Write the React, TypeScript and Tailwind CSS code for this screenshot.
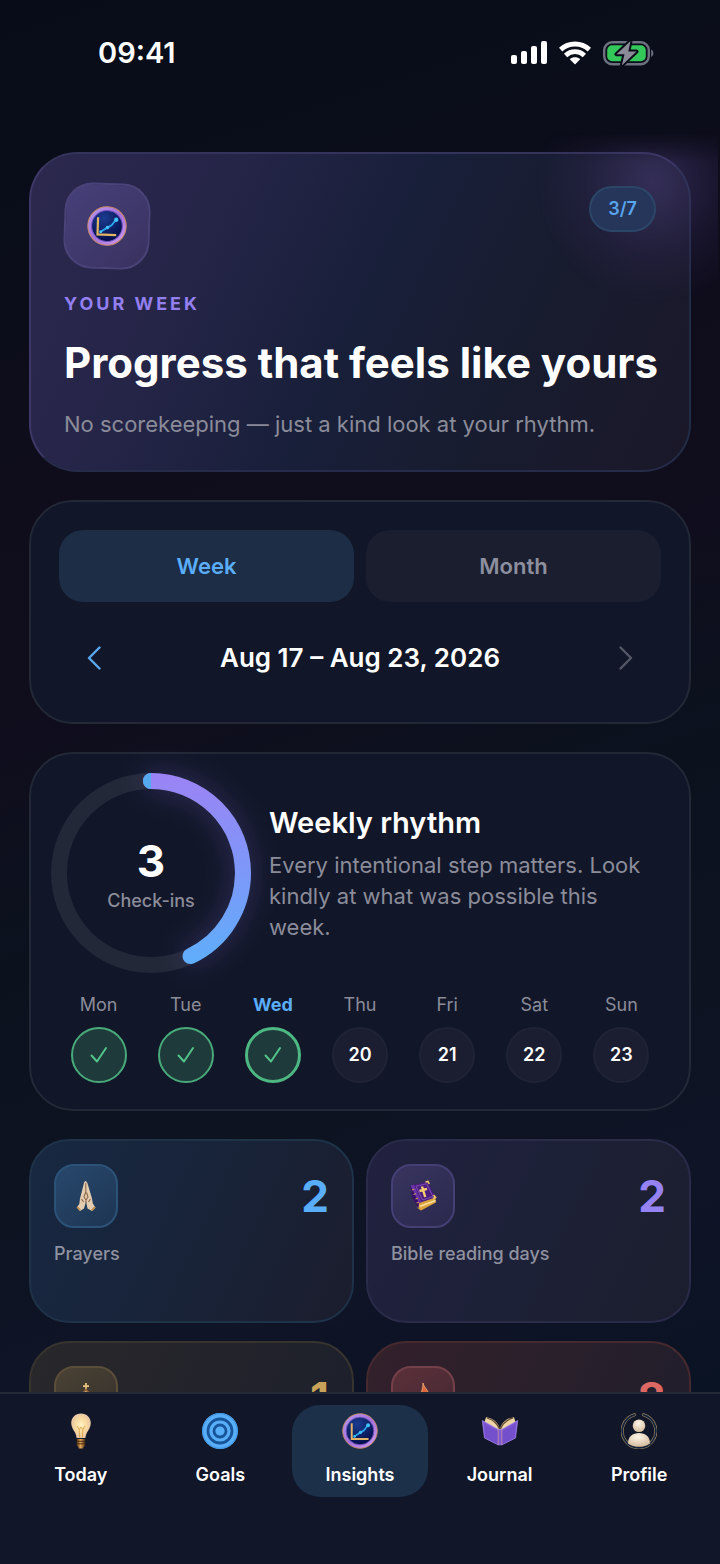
import React, { useState } from "react";

interface IconProps {
  className?: string;
}

interface StatCardProps {
  label: string;
  value: number;
  card: string;
  tile: string;
  valueColor: string;
  icon: React.ReactNode;
}

interface DayProps {
  name: string;
  date: number;
  done: boolean;
  today?: boolean;
}

const SignalIcon = () => (
  <svg className="w-9 h-6" viewBox="0 0 36 24" fill="#fff">
    <rect x="0" y="14" width="6" height="9" rx="2" />
    <rect x="10" y="10" width="6" height="13" rx="2" />
    <rect x="20" y="5" width="6" height="18" rx="2" />
    <rect x="30" y="0" width="6" height="23" rx="2" />
  </svg>
);

const WifiIcon = () => (
  <svg className="w-8 h-6" viewBox="0 0 32 24" fill="none" stroke="#fff">
    <path d="M1.6 8.6C9.8 1 22.2 1 30.4 8.6" strokeWidth="5" />
    <path d="M6.6 14.4c5.4-5 13.4-5 18.8 0" strokeWidth="4.8" />
    <path d="M16 23.6l-5.2-5.4c2.9-2.6 7.5-2.6 10.4 0z" fill="#fff" stroke="none" />
  </svg>
);

const BatteryIcon = () => (
  <svg className="w-[51px] h-[26px]" viewBox="0 0 51 26" fill="none">
    <rect x="1.2" y="2.2" width="44.6" height="22" rx="8" stroke="#6d7180" strokeWidth="2.4" />
    <rect x="4.2" y="5.2" width="38.6" height="16" rx="5" fill="#34c759" />
    <path d="M48.2 9.5c2.8 1 2.8 6.4 0 7.4z" fill="#6d7180" />
    <path
      d="M27.5 1L13.5 14.2h8L18.8 25.4 33.5 11.6h-8.2z"
      fill="#8a8b96"
      stroke="#080d19"
      strokeWidth="4"
      strokeLinejoin="round"
      paintOrder="stroke"
    />
  </svg>
);

const ChartIcon: React.FC<IconProps> = ({ className }) => (
  <svg className={className} viewBox="0 0 40 40" fill="none">
    <defs>
      <radialGradient id="chartFace" cx="40%" cy="25%" r="75%">
        <stop offset="0" stopColor="#1b3c8f" />
        <stop offset="1" stopColor="#050d4a" />
      </radialGradient>
      <linearGradient id="chartRim" x1="0" y1="0" x2="1" y2="1">
        <stop offset="0" stopColor="#b79cf0" />
        <stop offset="0.5" stopColor="#a570dc" />
        <stop offset="1" stopColor="#d3a0ee" />
      </linearGradient>
    </defs>
    <circle cx="20" cy="20" r="19.2" fill="url(#chartRim)" stroke="#c98a68" strokeWidth="1" />
    <circle cx="20" cy="20" r="15.4" fill="url(#chartFace)" stroke="#7457c4" />
    <path d="M10.8 11.5v17.3h18.7" stroke="#e2b566" strokeWidth="2.2" />
    <path d="M13 26.5l7-4.6 4.5-2.7 4.5-6" stroke="#28a9ef" strokeWidth="1.8" />
    <circle cx="14" cy="26" r="1.5" fill="#3fc0f8" />
    <circle cx="20.5" cy="21.5" r="1.8" fill="#3fc0f8" />
    <circle cx="29" cy="13.5" r="2.2" fill="#3fc0f8" />
  </svg>
);

const BulbIcon: React.FC<IconProps> = ({ className }) => (
  <svg className={className} viewBox="0 0 36 36" fill="none">
    <defs>
      <radialGradient id="bulbGlass" cx="50%" cy="48%" r="58%">
        <stop offset="0" stopColor="#fff3c4" />
        <stop offset="0.5" stopColor="#f8d9a0" />
        <stop offset="1" stopColor="#e2bfa6" />
      </radialGradient>
      <linearGradient id="bulbBase" x1="0" y1="0" x2="1" y2="0">
        <stop offset="0" stopColor="#5a3a18" />
        <stop offset="0.45" stopColor="#e0a659" />
        <stop offset="1" stopColor="#4a2d12" />
      </linearGradient>
    </defs>
    <path
      d="M18 .5c5.7 0 9.8 4.2 9.8 9.6 0 4.2-2.2 6.7-3.8 9.4-1 1.8-1.3 3.8-1.6 5.5h-8.800c-.3-1.700-.6-3.700-1.600-5.500C10.400 16.800 8.200 14.300 8.200 10.100 8.200 4.700 12.300.5 18 .5z"
      fill="url(#bulbGlass)"
    />
    <path d="M14 13l2.200 3.500L18 14l1.800 2.500L22 13M16.200 16.500l.5 8M19.800 16.500l-.5 8" stroke="#d99b3e" strokeWidth=".8" />
    <path d="M13.800 26h8.400v6.200l-1.800 2.200v1h-4.800v-1l-1.800-2.200z" fill="url(#bulbBase)" />
    <path d="M13.800 28.300h8.400M13.800 30.800h8.400" stroke="#3b230d" strokeWidth=".9" />
  </svg>
);

const TargetIcon: React.FC<IconProps> = ({ className }) => (
  <svg className={className} viewBox="0 0 36 36" fill="none">
    <circle cx="18" cy="18" r="18" fill="#59aef8" />
    <circle cx="18" cy="18" r="12" stroke="#17549a" strokeWidth="2.8" />
    <circle cx="18" cy="18" r="6" stroke="#17549a" strokeWidth="2.8" />
    <circle cx="18" cy="18" r="17.3" stroke="#3d93e4" />
  </svg>
);

const JournalIcon: React.FC<IconProps> = ({ className }) => (
  <svg className={className} viewBox="0 0 36 36" fill="none">
    <path d="M18 16.5C16.5 9.5 11 5 4 4.2L2.5 9 18 20zM18 16.5C19.5 9.5 25 5 32 4.200L33.500 9 18 20z" fill="#efd5a3" />
    <path d="M17.500 16C15 10 10.500 6.500 5 5M18.500 16C21 10 25.500 6.500 31 5" stroke="#5a432a" strokeWidth="1.2" />
    <path d="M.3 7.500L16.200 16.500h3.600L35.700 7.500 33.500 25 20 31.800h-4L2.500 25z" fill="#7d58d6" stroke="#a387f0" strokeWidth=".8" />
    <path d="M2.500 11L16 18.500v12.800L3.300 24.600zM33.500 11L20 18.500v12.800l12.700-6.700z" fill="#7450cc" />
    <path d="M16.200 16.500v15.300M19.800 16.500v15.300" stroke="#c18d9f" strokeWidth=".9" />
  </svg>
);

const ProfileIcon: React.FC<IconProps> = ({ className }) => (
  <svg className={className} viewBox="0 0 36 36" fill="none">
    <defs>
      <radialGradient id="profileSkin" cx="45%" cy="30%" r="75%">
        <stop offset="0" stopColor="#fff6e8" />
        <stop offset="1" stopColor="#d2b899" />
      </radialGradient>
    </defs>
    <path d="M13.500 1.800a16.800 16.800 0 1 0 9 0" stroke="#a08a63" strokeWidth="3" strokeLinecap="round" />
    <path d="M13.500 1.800a16.800 16.800 0 1 0 9 0" stroke="#13233d" strokeWidth="1.8" strokeLinecap="round" />
    <circle cx="18" cy="12.8" r="6.3" fill="url(#profileSkin)" />
    <path d="M7 30.500c0-7 4.500-10.500 11-10.500s11 3.500 11 10.500C26 33 22 33.600 18 33.600S10 33 7 30.500z" fill="url(#profileSkin)" />
  </svg>
);

const PrayerIcon = () => (
  <svg className="w-8 h-8" viewBox="0 0 32 32" fill="none">
    <path d="M15.500 1c-1.200.6-1.600 2-2 4L10 18.500 9.300 24 6.800 27.500 10 31l4-2.500 2-7 1.500 7L22 31l3.500-3.500-2.700-4-.8-5L18 5c-.5-2-1.200-3.600-2.500-4z" fill="#e3ccb0" />
    <path d="M15.800 3v9l-1.800 5 2 3 2-3-1.500-4.500M11.500 19l2 3M20.500 19l-2 3M16 20v3" stroke="#8a684b" strokeWidth="1.1" />
    <path d="M7.200 27l3 3.300M25 27l-3.200 3.300" stroke="#b98c4f" strokeWidth="1.8" />
  </svg>
);

const BibleIcon = () => (
  <svg className="w-8 h-8" viewBox="0 0 32 32" fill="none">
    <path d="M11 22l-.5 6 3.500 2.500 15-8-.7-6z" fill="#dba23c" />
    <path d="M12.500 26.500l16-6" stroke="#fbe0a0" strokeWidth="1.6" />
    <path d="M3.500 5.500L20.500 1.500 28.500 17.500 12 23z" fill="#4a1d7e" />
    <path d="M3.500 5.500L5 17l6.500 11.500L12 23z" fill="#35116a" />
    <path d="M3.500 5.500L7 4.700l7.500 17.500L12 23z" fill="#6a35a8" />
    <path d="M9 6.200l10.500-2.500 6.500 12.800-10.500 3.500z" stroke="#8d5bc0" strokeWidth=".8" />
    <path d="M15 6.500l3.200 10.500M12.500 11l7.500-2.200" stroke="#f6cd72" strokeWidth="2.4" />
    <path d="M18.500 2L21 1.500 22.200 4M26.500 15l2 2.500-2.500 1" stroke="#f2c866" strokeWidth="1.6" />
    <path d="M4.800 10l2.500-.8M6.500 14.500l2.500-.8M8.500 19l2.500-.8M9.500 23l2.500-.8" stroke="#d9a04a" />
  </svg>
);

const ChurchIcon = () => (
  <svg className="w-8 h-8" viewBox="0 0 32 32" fill="none">
    <path d="M16 1v9M13 4.200h6" stroke="#e8c27e" strokeWidth="1.8" />
    <path d="M16 7l6 7v16H10V14z" fill="#d8b78a" />
    <path d="M10.500 13.500L16 7.500l5.500 6" stroke="#8c5f34" strokeWidth="1.6" />
    <path d="M3 20l7-4v14H3zM29 20l-7-4v14h7z" fill="#b98f5d" />
    <path d="M14 30v-7h4v7z" fill="#5b3a20" />
  </svg>
);

const FlameIcon = () => (
  <svg className="w-8 h-8" viewBox="0 0 32 32" fill="none">
    <path d="M16 1c1 5 7 8 7 17 0 8-4 12-8.500 12S7 26 7 20c0-4 2-6 3-9l2.500 3C14.500 10 16 7 16 1z" fill="#e0663a" stroke="#efb07a" strokeWidth=".8" />
    <path d="M15.500 12c1 4 4 6 4 11 0 4-2 6-4.500 6s-5-2-5-6c0-3 4-6 5.500-11z" fill="#f8c56a" />
  </svg>
);

// Circular gauge, drawn clockwise from twelve o'clock
const RhythmRing: React.FC<{ value: number; total: number }> = ({ value, total }) => {
  const radius = 92;
  const length = 2 * Math.PI * radius;
  return (
    <div className="relative w-[200px] h-[200px] shrink-0">
      <svg className="w-full h-full overflow-visible" viewBox="0 0 200 200" fill="none">
        <defs>
          <linearGradient id="ring" gradientUnits="userSpaceOnUse" x1="200" y1="0" x2="0" y2="0">
            <stop offset="0" stopColor="#9b83f4" />
            <stop offset="0.5" stopColor="#7c98f8" />
            <stop offset="1" stopColor="#5cb0fb" />
          </linearGradient>
        </defs>
        <circle cx="100" cy="100" r={radius} stroke="#232838" strokeWidth="16" />
        <circle
          className="drop-shadow-[0_0_14px_rgba(139,116,240,0.3)]"
          cx="100"
          cy="100"
          r={radius}
          stroke="url(#ring)"
          strokeWidth="16"
          strokeLinecap="round"
          strokeDasharray={`${(length * value) / total} ${length}`}
          transform="rotate(-90 100 100)"
        />
        <path d="M100 0a8 8 0 0 0 0 16z" fill="#55a9ee" />
      </svg>
      <div className="absolute inset-0 flex flex-col items-center justify-center gap-0.5 pt-1.5">
        <span className="text-[44px] leading-12 font-bold text-white">{value}</span>
        <span className="text-lg leading-7 font-medium text-[#8b8c9a]">Check-ins</span>
      </div>
    </div>
  );
};

const Day: React.FC<DayProps> = ({ name, date, done, today }) => (
  <li className="flex flex-col items-center gap-2.5">
    <span className={today ? "text-lg leading-6 font-bold text-[#5aadf9]" : "text-lg leading-6 text-[#8b8c9a]"}>
      {name}
    </span>
    <span
      className={
        done
          ? today
            ? "w-14 h-14 rounded-full flex items-center justify-center bg-[#1f3a3b] border-[3px] border-[#4eb883]"
            : "w-14 h-14 rounded-full flex items-center justify-center bg-[#1f3a3b] border-2 border-[#48aa7a]"
          : "w-14 h-14 rounded-full flex items-center justify-center bg-[#1a1e30] border-2 border-[#1f2335] text-lg font-semibold text-white"
      }
    >
      {done ? (
        <svg className="w-5 h-5" viewBox="0 0 20 20" fill="none" stroke="#52c48a" strokeWidth="2" strokeLinecap="round" strokeLinejoin="round">
          <path d="M2.500 10.500l5.500 6 9-13.500" />
        </svg>
      ) : (
        date
      )}
    </span>
  </li>
);

const StatCard: React.FC<StatCardProps> = ({ label, value, card, tile, valueColor, icon }) => (
  <div className={`h-46 rounded-[40px] border-2 p-[23px] ${card}`}>
    <div className="flex items-center justify-between">
      <div className={`w-16 h-16 rounded-[20px] border-2 flex items-center justify-center ${tile}`}>{icon}</div>
      <span className={`text-[44px] leading-16 font-bold ${valueColor}`}>{value}</span>
    </div>
    <p className="mt-3.5 text-lg leading-6 font-medium text-[#9091a0]">{label}</p>
  </div>
);

const days: DayProps[] = [
  { name: "Mon", date: 17, done: true },
  { name: "Tue", date: 18, done: true },
  { name: "Wed", date: 19, done: true, today: true },
  { name: "Thu", date: 20, done: false },
  { name: "Fri", date: 21, done: false },
  { name: "Sat", date: 22, done: false },
  { name: "Sun", date: 23, done: false },
];

const tabs = [
  { name: "Today", Icon: BulbIcon },
  { name: "Goals", Icon: TargetIcon },
  { name: "Insights", Icon: ChartIcon },
  { name: "Journal", Icon: JournalIcon },
  { name: "Profile", Icon: ProfileIcon },
];

const App: React.FC = () => {
  const [range, setRange] = useState("Week");
  const [tab, setTab] = useState("Insights");

  return (
    <div className="h-screen flex flex-col overflow-hidden font-['Inter',sans-serif] bg-[linear-gradient(162deg,#070c18_0%,#080d19_8%,#0f0d1c_28%,#100d1d_40%,#0b121e_54%,#0d1320_66%,#0f1427_78%,#0a1323_90%)]">
      {/* Status bar */}
      <header className="shrink-0 flex items-center justify-between pt-8 pb-14 pl-[98px] pr-[66px]">
        <span className="text-[29px] leading-[42px] font-semibold text-white">09:41</span>
        <div className="flex items-center gap-3">
          <SignalIcon />
          <WifiIcon />
          <BatteryIcon />
        </div>
      </header>

      <main className="flex-1 min-h-0 overflow-y-auto overflow-x-hidden [scrollbar-width:none] px-[29px] pt-[22px] pb-7 flex flex-col gap-7">
        {/* Weekly summary */}
        <section className="relative shrink-0 rounded-[48px] border-2 border-t-[#34335a] border-l-[#3d3866] border-r-[#222c45] border-b-[#252b48] bg-[linear-gradient(115deg,#2c284e_0%,#252548_25%,#181f39_50%,#181c2f_72%,#1a1829_100%)] px-[33px] pt-[29px] pb-[30px]">
          <div className="absolute -top-[22px] -right-[29px] w-[190px] h-[180px] bg-[radial-gradient(ellipse_at_66%_28%,rgba(80,66,130,0.5),rgba(60,46,100,0.22)_40%,transparent_66%)] [mask-image:linear-gradient(to_bottom,transparent,black_30px)]" />
          <div className="relative flex items-start justify-between">
            <div className="w-[86px] h-[86px] rounded-[28px] border-2 border-[#4a4379] bg-[linear-gradient(135deg,#46407a,#39325f)] rotate-2 flex items-center justify-center">
              <ChartIcon className="w-10 h-10" />
            </div>
            <span className="mt-[3px] h-[46px] px-[17px] rounded-full border-2 border-[#2c4668] bg-[#26355a] flex items-center text-lg font-semibold text-[#57a5ee]">
              3/7
            </span>
          </div>
          <p className="mt-[23px] text-lg leading-6 font-bold tracking-[3px] text-[#937ff0]">YOUR WEEK</p>
          <h1 className="mt-5 text-[42px] leading-[54px] font-bold whitespace-nowrap text-white">
            Progress that feels like yours
          </h1>
          <p className="mt-[18px] text-[22px] leading-8 text-[#8b8c9a]">
            No scorekeeping — just a kind look at your rhythm.
          </p>
        </section>

        {/* Range picker */}
        <section className="shrink-0 rounded-[44px] border-2 border-[#232837] bg-[#111628] p-7">
          <div className="grid grid-cols-2 gap-3">
            {["Week", "Month"].map((name) => (
              <button
                key={name}
                type="button"
                aria-pressed={range === name}
                onClick={() => setRange(name)}
                className={
                  range === name
                    ? "h-18 rounded-[24px] bg-[#1c2d45] text-[22px] font-semibold text-[#5aadf9]"
                    : "h-18 rounded-[24px] bg-[#1a1e2f] text-[22px] font-semibold text-[#8e8f9e]"
                }
              >
                {name}
              </button>
            ))}
          </div>
          <div className="mt-5 flex items-center justify-between">
            <button type="button" aria-label="Previous week" className="w-[70px] h-18 flex items-center justify-center">
              <svg className="w-3.5 h-6" viewBox="0 0 14 24" fill="none" stroke="#59a9f0" strokeWidth="2.4" strokeLinecap="round" strokeLinejoin="round">
                <path d="M12.500 1.500L2 12l10.500 10.500" />
              </svg>
            </button>
            <h2 className="text-[26px] leading-8 font-semibold text-white">Aug 17 – Aug 23, 2026</h2>
            <button type="button" aria-label="Next week" className="w-[70px] h-18 flex items-center justify-center">
              <svg className="w-3.5 h-6" viewBox="0 0 14 24" fill="none" stroke="#545766" strokeWidth="2.4" strokeLinecap="round" strokeLinejoin="round">
                <path d="M1.500 1.500L12 12 1.500 22.500" />
              </svg>
            </button>
          </div>
        </section>

        {/* Rhythm */}
        <section className="shrink-0 rounded-[44px] border-2 border-[#232837] bg-[#111628] px-5 pt-[19px] pb-[26px]">
          <div className="flex items-center gap-[18px]">
            <RhythmRing value={3} total={7} />
            <div className="pr-3">
              <h2 className="text-[29px] leading-[38px] font-semibold text-white">Weekly rhythm</h2>
              <p className="mt-2 text-[22px] leading-[31px] text-[#8b8c9a]">
                Every intentional step matters. Look kindly at what was possible this week.
              </p>
            </div>
          </div>
          <ul className="mt-5 px-1 grid grid-cols-7">
            {days.map((day) => (
              <Day key={day.name} {...day} />
            ))}
          </ul>
        </section>

        {/* Totals */}
        <section className="shrink-0 grid grid-cols-2 gap-x-3 gap-y-[18px]">
          <StatCard
            label="Prayers"
            value={2}
            card="border-[#1e3248] bg-[linear-gradient(115deg,#172841,#18243a_45%,#1b1d2d)]"
            tile="border-[#2c5278] bg-[linear-gradient(145deg,#27486c,#1e3553)]"
            valueColor="text-[#5aadf9]"
            icon={<PrayerIcon />}
          />
          <StatCard
            label="Bible reading days"
            value={2}
            card="border-[#2a2b48] bg-[linear-gradient(115deg,#21213f,#1d2138_45%,#1b1e2d)]"
            tile="border-[#443f74] bg-[linear-gradient(145deg,#38345f,#2a294d)]"
            valueColor="text-[#9683f3]"
            icon={<BibleIcon />}
          />
          <StatCard
            label="Church visits"
            value={1}
            card="border-[#37342f] bg-[linear-gradient(115deg,#28272a,#23242b_45%,#1b1e2b)]"
            tile="border-[#5a4e3a] bg-[linear-gradient(145deg,#4a4234,#342f2c)]"
            valueColor="text-[#c7a258]"
            icon={<ChurchIcon />}
          />
          <StatCard
            label="Active days"
            value={8}
            card="border-[#45292f] bg-[linear-gradient(115deg,#33202b,#2a202b_45%,#1e1d2b)]"
            tile="border-[#74404a] bg-[linear-gradient(145deg,#5b3039,#432833)]"
            valueColor="text-[#dd6763]"
            icon={<FlameIcon />}
          />
        </section>
      </main>

      {/* Tab bar */}
      <nav className="shrink-0 border-t-2 border-[#252a39] bg-[#111628] px-[13px] pt-[11px] pb-[67px] grid grid-cols-5 gap-1">
        {tabs.map(({ name, Icon }) => (
          <button
            key={name}
            type="button"
            aria-current={tab === name ? "page" : undefined}
            onClick={() => setTab(name)}
            className={
              tab === name
                ? "h-23 rounded-[28px] pb-0.5 bg-[#1c304a] flex flex-col items-center justify-center gap-3.5"
                : "h-23 rounded-[28px] pb-0.5 flex flex-col items-center justify-center gap-3.5"
            }
          >
            <Icon className="w-9 h-9" />
            <span className="text-lg leading-6 font-semibold text-white">{name}</span>
          </button>
        ))}
      </nav>
    </div>
  );
};

export default App;
